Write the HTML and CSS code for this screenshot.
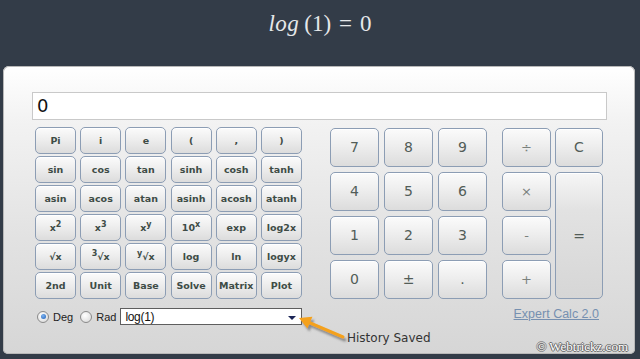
FILE: index.html
```html
<!DOCTYPE html>
<html>
<head>
<meta charset="utf-8">
<link rel="stylesheet" href="styles.css">
</head>
<body>
<header class="title"><span class="math"><i>log</i><span class="paren">(1)</span><span class="eq">=</span>0</span></header>
<main class="panel">
  <div class="display">0</div>
  <div class="body">
    <div class="left">
      <div class="fn-grid">
        <button class="key">Pi</button><button class="key">i</button><button class="key">e</button><button class="key">(</button><button class="key">,</button><button class="key">)</button>
        <button class="key">sin</button><button class="key">cos</button><button class="key">tan</button><button class="key">sinh</button><button class="key">cosh</button><button class="key">tanh</button>
        <button class="key">asin</button><button class="key">acos</button><button class="key">atan</button><button class="key">asinh</button><button class="key">acosh</button><button class="key">atanh</button>
        <button class="key">x<sup>2</sup></button><button class="key">x<sup>3</sup></button><button class="key">x<sup>y</sup></button><button class="key">10<sup>x</sup></button><button class="key">exp</button><button class="key">log2x</button>
        <button class="key">√x</button><button class="key"><sup>3</sup>√x</button><button class="key"><sup>y</sup>√x</button><button class="key">log</button><button class="key">ln</button><button class="key">logyx</button>
        <button class="key">2nd</button><button class="key">Unit</button><button class="key">Base</button><button class="key">Solve</button><button class="key">Matrix</button><button class="key">Plot</button>
      </div>
      <div class="opts">
        <span class="radio on"></span><span class="opt-label">Deg</span>
        <span class="radio"></span><span class="opt-label">Rad</span>
        <div class="history"><span>log(1)</span><span class="caret"></span></div>
      </div>
    </div>
    <div class="right">
      <div class="pad">
        <div class="num-grid">
          <button class="nkey">7</button><button class="nkey">8</button><button class="nkey">9</button>
          <button class="nkey">4</button><button class="nkey">5</button><button class="nkey">6</button>
          <button class="nkey">1</button><button class="nkey">2</button><button class="nkey">3</button>
          <button class="nkey">0</button><button class="nkey">±</button><button class="nkey">.</button>
        </div>
        <div class="ops-grid">
          <button class="nkey op">÷</button><button class="nkey">C</button>
          <button class="nkey op">×</button><button class="nkey equals">=</button>
          <button class="nkey op">-</button>
          <button class="nkey op">+</button>
        </div>
      </div>
      <div class="link-row"><a class="link">Expert Calc 2.0</a></div>
    </div>
  </div>
  <svg class="arrow" width="60" height="36" viewBox="0 0 60 36">
    <defs>
      <filter id="sh" x="-20%" y="-20%" width="150%" height="150%">
        <feDropShadow dx="2" dy="3" stdDeviation="1.2" flood-color="#555" flood-opacity="0.6"/>
      </filter>
    </defs>
    <g filter="url(#sh)">
      <line x1="14" y1="10.5" x2="48" y2="25" stroke="#f4a11c" stroke-width="3" stroke-linecap="round"/>
      <polygon points="4,6 17.4,4.8 12.4,16.6" fill="#f4a11c"/>
    </g>
  </svg>
  <div class="note">History Saved</div>
  <div class="mark">© Webtrickz.com</div>
</main>
</body>
</html>
```
FILE: styles.css
```css
html, body {
  margin: 0;
  padding: 0;
}
body {
  width: 640px;
  height: 359px;
  background: #333c48;
  overflow: hidden;
}
.title {
  height: 66px;
  box-sizing: border-box;
  padding-top: 10px;
  text-align: center;
  color: #e6e8ea;
  font-family: "Liberation Serif", serif;
  font-size: 23px;
  line-height: 28px;
}
.math i {
  font-style: italic;
  letter-spacing: 0.5px;
}
.paren {
  margin-left: 5px;
}
.eq {
  margin: 0 8px;
}
.panel {
  position: relative;
  margin-left: 3px;
  width: 632px;
  height: 288px;
  box-sizing: border-box;
  padding: 26px 0 0 29px;
  border-radius: 6px 6px 5px 5px;
  background: linear-gradient(#ffffff 0%, #f2f2f2 20%, #e2e2e2 60%, #d6d6d6 100%);
  box-shadow: inset 0 0 0 1px #b8b8b8;
}
.display {
  width: 575px;
  height: 28px;
  box-sizing: border-box;
  border: 1px solid #c9c9c9;
  background: #fff;
  font-family: "DejaVu Sans", sans-serif;
  font-size: 18px;
  line-height: 26px;
  padding-left: 4px;
  color: #111;
}
.body {
  display: flex;
  margin-top: 7px;
  margin-left: 3px;
}
.left {
  width: 267px;
  flex: none;
}
.fn-grid {
  display: grid;
  grid-template-columns: repeat(6, 41px);
  grid-auto-rows: 27px;
  column-gap: 4.2px;
  row-gap: 2px;
}
.key, .nkey {
  margin: 0;
  padding: 0;
  border: 1px solid #8c9db4;
  border-radius: 5px;
  background: linear-gradient(#fbfbfb 0%, #eeeeee 45%, #dcdcdc 100%);
  box-shadow: inset 0 1px 0 #ffffff;
  color: #3e4c46;
  text-align: center;
}
.key {
  font-family: "DejaVu Sans", sans-serif;
  font-weight: bold;
  font-size: 9.5px;
  line-height: 25px;
}
.key sup {
  font-size: 8px;
  line-height: 0;
  vertical-align: 4px;
}
.opts {
  display: flex;
  align-items: center;
  height: 17px;
  margin-top: 9px;
  font-family: "Liberation Sans", sans-serif;
  font-size: 11px;
  color: #222;
}
.radio {
  flex: none;
  width: 10px;
  height: 10px;
  border-radius: 50%;
  border: 1px solid #8a8a8a;
  background: radial-gradient(circle at 40% 35%, #ffffff, #d6d6d6);
  margin-left: 2px;
  margin-right: 4px;
  position: relative;
}
.radio.on::after {
  content: "";
  position: absolute;
  left: 2.5px;
  top: 2.5px;
  width: 5px;
  height: 5px;
  border-radius: 50%;
  background: radial-gradient(circle at 40% 35%, #7db3f0, #1d5fb8);
}
.opt-label {
  margin-right: 7px;
}
.opt-label + .radio {
  margin-left: 0;
}
.history {
  flex: 1;
  height: 17px;
  box-sizing: border-box;
  margin-left: -3px;
  border: 1px solid #5e5e5e;
  background: #fff;
  display: flex;
  align-items: center;
  justify-content: space-between;
  padding: 0 5px 0 4px;
  font-size: 12px;
  letter-spacing: -0.3px;
  color: #111;
}
.caret {
  width: 0;
  height: 0;
  border-left: 4px solid transparent;
  border-right: 4px solid transparent;
  border-top: 4px solid #1b2556;
  margin-top: 2px;
}
.right {
  margin-left: 28px;
  margin-top: 1px;
}
.pad {
  display: flex;
}
.num-grid {
  display: grid;
  grid-template-columns: repeat(3, 49px);
  grid-auto-rows: 39px;
  gap: 5px;
}
.ops-grid {
  display: grid;
  grid-template-columns: 49px 48px;
  grid-template-rows: repeat(4, 39px);
  column-gap: 4px;
  row-gap: 5px;
  margin-left: 15px;
}
.nkey {
  font-family: "DejaVu Sans", sans-serif;
  font-size: 14px;
  line-height: 37px;
  color: #525d58;
}
.nkey.op {
  grid-column: 1;
  color: #7a817d;
  font-size: 13px;
}
.nkey.equals {
  grid-column: 2;
  grid-row: 2 / span 3;
  line-height: normal;
  background: linear-gradient(#f6f6f6 0%, #e2e2e2 30%, #d6d6d6 100%);
}
.link-row {
  display: flex;
  justify-content: flex-end;
  margin-top: 8px;
  padding-right: 4px;
}
.link {
  font-family: "Liberation Sans", sans-serif;
  font-size: 12.5px;
  color: #7690b0;
  text-decoration: underline;
}
.arrow {
  position: absolute;
  left: 292px;
  top: 246px;
}
.note {
  position: absolute;
  left: 344px;
  top: 265px;
  font-family: "DejaVu Sans", sans-serif;
  font-size: 12px;
  color: #333;
}
.mark {
  position: absolute;
  right: 7px;
  bottom: 0;
  font-family: "Liberation Serif", serif;
  font-size: 13px;
  line-height: 14px;
  color: #ffffff;
  text-shadow: 1px 0 0 #666, -1px 0 0 #666, 0 1px 0 #666, 0 -1px 0 #666;
}
```
